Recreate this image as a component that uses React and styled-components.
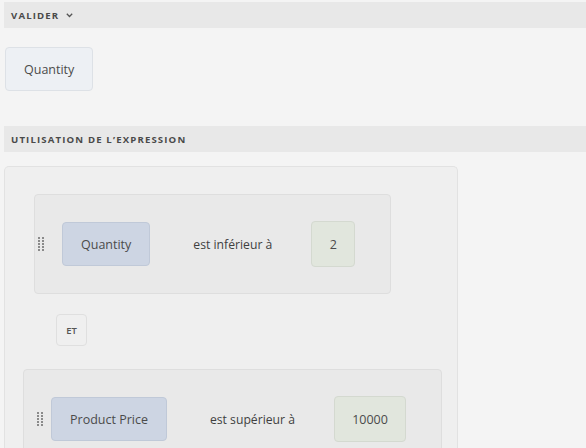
import React from 'react';
import styled, { createGlobalStyle } from 'styled-components';

const Global = createGlobalStyle`
  body {
    margin: 0;
    background: #f4f4f4;
    font-family: "Open Sans", "Noto Sans", sans-serif;
    color: #4b4b4b;
  }
`

const Page = styled.div`
  padding: 2px 0 0 4px;
  width: 582px;
  height: 446px;
  overflow: hidden;
`

const SectionBar = styled.div`
  display: flex;
  align-items: center;
  gap: 7px;
  height: 26px;
  padding-left: 7px;
  background: #e8e8e8;
  font-size: 9.6px;
  font-weight: 700;
  letter-spacing: 1.15px;
  text-transform: uppercase;
  color: #4a4a4a;
`

const ChipArea = styled.div`
  padding: 19px 0 35px 1px;
`

const Chip = styled.div`
  display: inline-flex;
  align-items: center;
  justify-content: center;
  box-sizing: border-box;
  height: ${p => p.h || 44}px;
  padding: 0 ${p => p.pad || 18}px;
  border-radius: 4px;
  font-size: 12.5px;
  color: #4b4b4b;
  background: ${p => p.bg};
  border: 1px solid ${p => p.border};
  flex-shrink: 0;
`

const Container = styled.div`
  margin-top: 14px;
  width: 454px;
  box-sizing: border-box;
  height: 300px;
  background: #efefef;
  border: 1px solid #e2e2e2;
  border-bottom: none;
  border-radius: 5px 5px 0 0;
  padding: 27px 0 0 0;
`

const Card = styled.div`
  box-sizing: border-box;
  margin-left: ${p => p.left}px;
  width: ${p => p.w}px;
  height: 100px;
  background: #e9e9e9;
  border: 1px solid #dedede;
  border-radius: 4px;
  display: flex;
  align-items: center;
`

const Handle = styled.div`
  width: 6px;
  margin-left: ${p => p.left}px;
  margin-right: ${p => p.right}px;
  display: flex;
`

const Operator = styled.span`
  font-size: 12.2px;
  color: #3f3f3f;
  margin: 0 39px 0 43px;
  white-space: nowrap;
`

const Joiner = styled.div`
  display: flex;
  align-items: center;
  justify-content: center;
  box-sizing: border-box;
  width: 31px;
  height: 32px;
  margin: 20px 0 23px 51px;
  border: 1px solid #dfdfdf;
  border-radius: 4px;
  background: #efefef;
  font-size: 9.5px;
  font-weight: 600;
  color: #555;
`

const Dots = () => (
  <svg width="6" height="15" viewBox="0 0 6 15">
    {[0, 3, 6, 9, 12].map(y => (
      <g key={y} fill="#8a8a8a">
        <rect x="0" y={y} width="2" height="2" />
        <rect x="4" y={y} width="2" height="2" />
      </g>
    ))}
  </svg>
)

const Condition = ({ left, w, handleLeft, handleRight, field, op, value }) => (
  <Card left={left} w={w}>
    <Handle left={handleLeft} right={handleRight}><Dots /></Handle>
    <Chip bg="#cdd5e3" border="#c0c9d8">{field}</Chip>
    <Operator>{op}</Operator>
    <Chip bg="#e1e6dd" border="#d4d9d0" h={46} pad={0} style={{ width: value.length > 1 ? 72 : 44 }}>{value}</Chip>
  </Card>
)

export default function App() {
  return (
    <Page>
      <Global />
      <SectionBar>
        Valider
        <svg width="7" height="5" viewBox="0 0 7 5">
          <polyline points="0.8,0.8 3.5,3.5 6.2,0.8" fill="none" stroke="#555" strokeWidth="1.3" />
        </svg>
      </SectionBar>
      <ChipArea>
        <Chip bg="#edf0f4" border="#dde1e6" pad={18}>Quantity</Chip>
      </ChipArea>
      <SectionBar>Utilisation de l’expression</SectionBar>
      <Container>
        <Condition left={29} w={357} handleLeft={3} handleRight={18} field="Quantity" op="est inférieur à" value="2" />
        <Joiner>ET</Joiner>
        <Condition left={18} w={419} handleLeft={13} handleRight={8} field="Product Price" op="est supérieur à" value="10000" />
      </Container>
    </Page>
  );
}
